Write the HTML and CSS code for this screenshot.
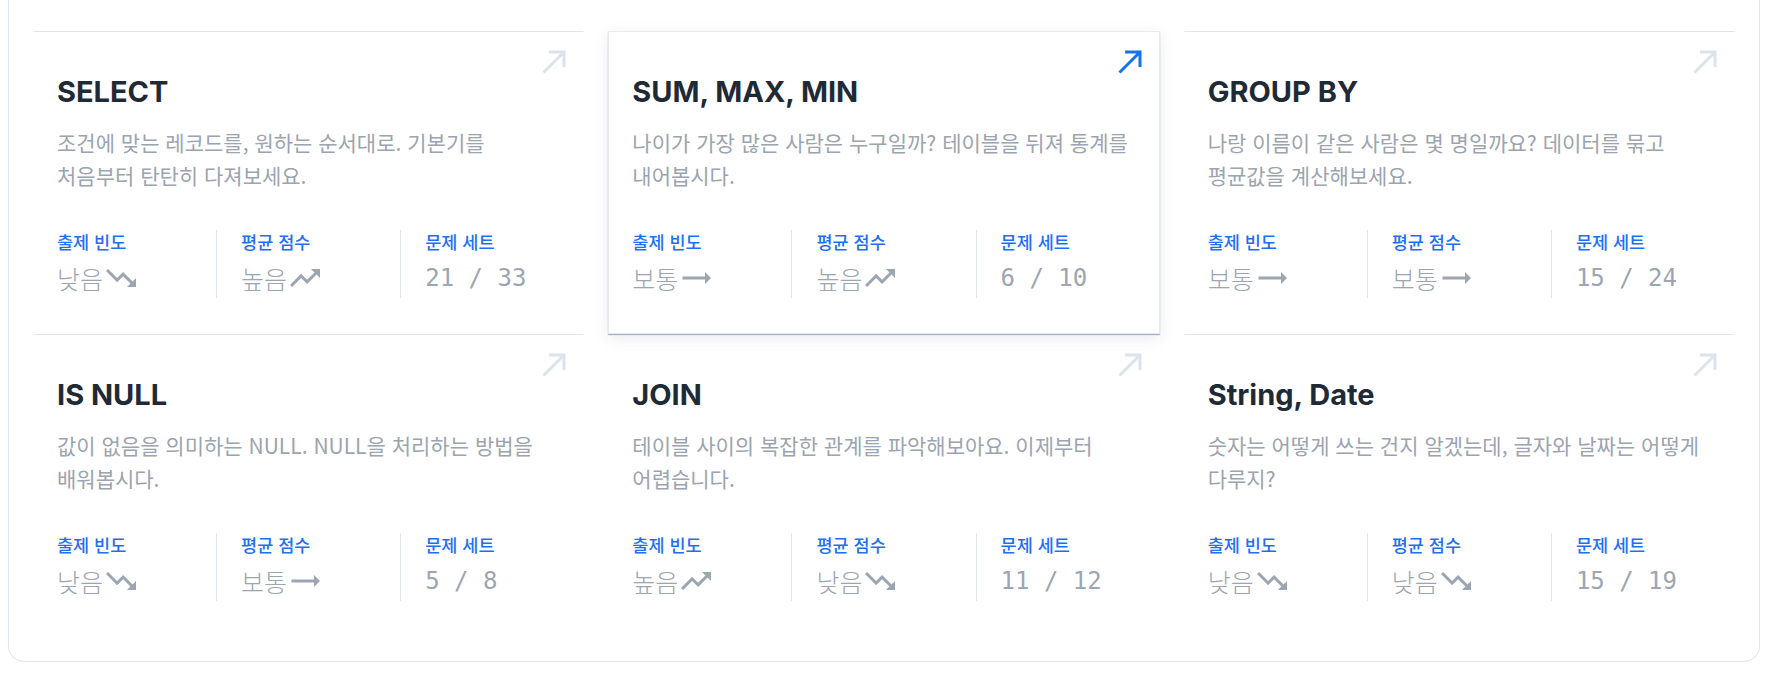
FILE: index.html
```html
<!DOCTYPE html>
<html lang="ko">
<head>
<meta charset="utf-8">
<title>SQL 주제</title>
<link rel="stylesheet" href="styles.css">
</head>
<body>
<div class="panel">
  <div class="grid">

    <article class="card">
      <svg class="go" viewBox="0 0 24 24"><path d="M1.5 22.5L22 2M7 2H22V17"/></svg>
      <h3 class="card-title">SELECT</h3>
      <p class="card-desc">조건에 맞는 레코드를, 원하는 순서대로. 기본기를 처음부터 탄탄히 다져보세요.</p>
      <div class="stats">
        <div class="stat"><div class="stat-label">출제 빈도</div><div class="stat-value">낮음<svg class="trend" viewBox="0 0 24 24"><path d="M16 18l2.29-2.29-4.88-4.88-4 4L2 7.41 3.41 6l6 6 4-4 6.3 6.29L22 12v6z"/></svg></div></div>
        <div class="stat"><div class="stat-label">평균 점수</div><div class="stat-value">높음<svg class="trend" viewBox="0 0 24 24"><path d="M16 6l2.29 2.29-4.88 4.88-4-4L2 16.59 3.41 18l6-6 4 4 6.3-6.29L22 12V6z"/></svg></div></div>
        <div class="stat"><div class="stat-label">문제 세트</div><div class="stat-value mono">21 / 33</div></div>
      </div>
    </article>

    <article class="card active">
      <svg class="go" viewBox="0 0 24 24"><path d="M1.5 22.5L22 2M7 2H22V17"/></svg>
      <h3 class="card-title">SUM, MAX, MIN</h3>
      <p class="card-desc">나이가 가장 많은 사람은 누구일까? 테이블을 뒤져 통계를 내어봅시다.</p>
      <div class="stats">
        <div class="stat"><div class="stat-label">출제 빈도</div><div class="stat-value">보통<svg class="trend" viewBox="0 0 24 24"><path d="M22 12l-4-4v3H3v2h15v3z"/></svg></div></div>
        <div class="stat"><div class="stat-label">평균 점수</div><div class="stat-value">높음<svg class="trend" viewBox="0 0 24 24"><path d="M16 6l2.29 2.29-4.88 4.88-4-4L2 16.59 3.41 18l6-6 4 4 6.3-6.29L22 12V6z"/></svg></div></div>
        <div class="stat"><div class="stat-label">문제 세트</div><div class="stat-value mono">6 / 10</div></div>
      </div>
    </article>

    <article class="card">
      <svg class="go" viewBox="0 0 24 24"><path d="M1.5 22.5L22 2M7 2H22V17"/></svg>
      <h3 class="card-title">GROUP BY</h3>
      <p class="card-desc">나랑 이름이 같은 사람은 몇 명일까요? 데이터를 묶고 평균값을 계산해보세요.</p>
      <div class="stats">
        <div class="stat"><div class="stat-label">출제 빈도</div><div class="stat-value">보통<svg class="trend" viewBox="0 0 24 24"><path d="M22 12l-4-4v3H3v2h15v3z"/></svg></div></div>
        <div class="stat"><div class="stat-label">평균 점수</div><div class="stat-value">보통<svg class="trend" viewBox="0 0 24 24"><path d="M22 12l-4-4v3H3v2h15v3z"/></svg></div></div>
        <div class="stat"><div class="stat-label">문제 세트</div><div class="stat-value mono">15 / 24</div></div>
      </div>
    </article>

    <article class="card">
      <svg class="go" viewBox="0 0 24 24"><path d="M1.5 22.5L22 2M7 2H22V17"/></svg>
      <h3 class="card-title">IS NULL</h3>
      <p class="card-desc">값이 없음을 의미하는 NULL. NULL을 처리하는 방법을 배워봅시다.</p>
      <div class="stats">
        <div class="stat"><div class="stat-label">출제 빈도</div><div class="stat-value">낮음<svg class="trend" viewBox="0 0 24 24"><path d="M16 18l2.29-2.29-4.88-4.88-4 4L2 7.41 3.41 6l6 6 4-4 6.3 6.29L22 12v6z"/></svg></div></div>
        <div class="stat"><div class="stat-label">평균 점수</div><div class="stat-value">보통<svg class="trend" viewBox="0 0 24 24"><path d="M22 12l-4-4v3H3v2h15v3z"/></svg></div></div>
        <div class="stat"><div class="stat-label">문제 세트</div><div class="stat-value mono">5 / 8</div></div>
      </div>
    </article>

    <article class="card">
      <svg class="go" viewBox="0 0 24 24"><path d="M1.5 22.5L22 2M7 2H22V17"/></svg>
      <h3 class="card-title">JOIN</h3>
      <p class="card-desc">테이블 사이의 복잡한 관계를 파악해보아요. 이제부터 어렵습니다.</p>
      <div class="stats">
        <div class="stat"><div class="stat-label">출제 빈도</div><div class="stat-value">높음<svg class="trend" viewBox="0 0 24 24"><path d="M16 6l2.29 2.29-4.88 4.88-4-4L2 16.59 3.41 18l6-6 4 4 6.3-6.29L22 12V6z"/></svg></div></div>
        <div class="stat"><div class="stat-label">평균 점수</div><div class="stat-value">낮음<svg class="trend" viewBox="0 0 24 24"><path d="M16 18l2.29-2.29-4.88-4.88-4 4L2 7.41 3.41 6l6 6 4-4 6.3 6.29L22 12v6z"/></svg></div></div>
        <div class="stat"><div class="stat-label">문제 세트</div><div class="stat-value mono">11 / 12</div></div>
      </div>
    </article>

    <article class="card">
      <svg class="go" viewBox="0 0 24 24"><path d="M1.5 22.5L22 2M7 2H22V17"/></svg>
      <h3 class="card-title">String, Date</h3>
      <p class="card-desc">숫자는 어떻게 쓰는 건지 알겠는데, 글자와 날짜는 어떻게 다루지?</p>
      <div class="stats">
        <div class="stat"><div class="stat-label">출제 빈도</div><div class="stat-value">낮음<svg class="trend" viewBox="0 0 24 24"><path d="M16 18l2.29-2.29-4.88-4.88-4 4L2 7.41 3.41 6l6 6 4-4 6.3 6.29L22 12v6z"/></svg></div></div>
        <div class="stat"><div class="stat-label">평균 점수</div><div class="stat-value">낮음<svg class="trend" viewBox="0 0 24 24"><path d="M16 18l2.29-2.29-4.88-4.88-4 4L2 7.41 3.41 6l6 6 4-4 6.3 6.29L22 12v6z"/></svg></div></div>
        <div class="stat"><div class="stat-label">문제 세트</div><div class="stat-value mono">15 / 19</div></div>
      </div>
    </article>

  </div>
</div>
</body>
</html>
```

FILE: styles.css
```css
* { box-sizing: border-box; }

html, body {
  margin: 0;
  padding: 0;
  background: #ffffff;
}

body {
  font-family: "Noto Sans CJK KR", "Noto Sans", sans-serif;
}

.panel {
  width: 1752px;
  margin-left: 8px;
  border: 1px solid #dfe6ee;
  border-top: none;
  border-radius: 0 0 16px 16px;
  padding: 31px 24px 24px 24px;
  background: #ffffff;
}

.grid {
  display: grid;
  grid-template-columns: repeat(3, 1fr);
  column-gap: 24px;
}

.card {
  position: relative;
  border: 1px solid transparent;
  border-top-color: #dfe6ee;
  padding: 42px 23px 35px 23px;
  background: #ffffff;
}

.card.active {
  border-color: #e6eaf0;
  box-shadow: 0 1px 1px rgba(110, 125, 170, 0.45), 0 4px 14px rgba(40, 60, 110, 0.10);
  z-index: 1;
}

.go {
  position: absolute;
  top: 18px;
  right: 17px;
  width: 24px;
  height: 24px;
  fill: none;
  stroke: #dbe4ee;
  stroke-width: 3;
  stroke-linecap: butt;
  stroke-linejoin: miter;
}

.card.active .go {
  stroke: #1473f5;
}

.card-title {
  margin: 0;
  font-family: "Inter", "Noto Sans CJK KR", sans-serif;
  font-weight: 700;
  font-size: 29px;
  line-height: 36px;
  color: #1f2a37;
  letter-spacing: 0;
}

.card-desc {
  margin: 16px 0 38px 0;
  font-family: "Noto Sans CJK KR", sans-serif;
  font-size: 21px;
  line-height: 33px;
  color: #9ba4b0;
  word-break: keep-all;
}

.stats {
  display: flex;
}

.stat {
  flex: 1 1 0;
  min-width: 0;
  padding: 0 24px;
  border-left: 1px solid #dfe6ee;
}

.stat:first-child {
  padding-left: 0;
  border-left: none;
}

.stat:last-child {
  padding-right: 0;
}

.stat-label {
  font-family: "Noto Sans CJK KR", sans-serif;
  font-weight: 500;
  font-size: 17.5px;
  line-height: 24px;
  color: #1d6ff3;
}

.stat-value {
  margin-top: 4px;
  height: 40px;
  display: flex;
  align-items: center;
  font-family: "Noto Sans CJK KR", sans-serif;
  font-weight: 300;
  font-size: 25px;
  line-height: 40px;
  color: #9ca6b2;
  white-space: pre;
}

.stat-value.mono {
  font-family: "DejaVu Sans Mono", "Liberation Mono", monospace;
  font-weight: 400;
  font-size: 24px;
}

.trend {
  flex: none;
  width: 36px;
  height: 36px;
  fill: #9ca6b2;
}
```
